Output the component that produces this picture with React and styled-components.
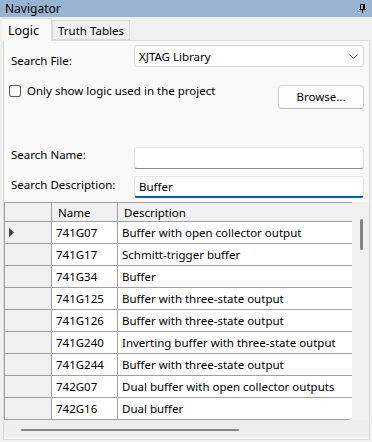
import React from "react";
import styled, { createGlobalStyle } from "styled-components";

const GlobalStyle = createGlobalStyle`
    html, body {
        margin: 0;
        padding: 0;
        background: #f0f0f0;
    }
    * {
        box-sizing: border-box;
    }
`

const Window = styled.div`
    width: 372px;
    height: 442px;
    display: flex;
    flex-direction: column;
    background: #f0f0f0;
    font-family: "Noto Sans", "Open Sans", sans-serif;
    font-size: 11.5px;
    color: #000;
    overflow: hidden;
`

const TitleBar = styled.div`
    height: 17px;
    flex: none;
    display: flex;
    align-items: center;
    justify-content: space-between;
    padding: 0 6px 0 5px;
    background: #99b4d1;
    line-height: 17px;
    font-size: 12px;
`

const TabStrip = styled.div`
    height: 23px;
    flex: none;
    display: flex;
    align-items: flex-end;
    padding-left: 2px;
    position: relative;
    z-index: 1;
`

const Tab = styled.div`
    height: ${p => (p.$active ? "23px" : "20px")};
    padding: ${p => (p.$active ? "0 12px 0 6px" : "1px 5px 0")};
    display: flex;
    align-items: center;
    background: ${p => (p.$active ? "#f9f9f9" : "#f0f0f0")};
    border: 1px solid #d9d9d9;
    border-bottom: ${p => (p.$active ? "none" : "1px solid #d9d9d9")};
    border-left: ${p => (p.$active ? "none" : "1px solid #d9d9d9")};
    margin-bottom: ${p => (p.$active ? "-1px" : "0")};
    font-size: ${p => (p.$active ? "12.5px" : "11.5px")};
`

const Panel = styled.div`
    flex: 1;
    display: flex;
    flex-direction: column;
    margin: 0 2px 2px 3px;
    border: 1px solid #d9d9d9;
    background: #f9f9f9;
    min-height: 0;
`

const FieldRow = styled.div`
    display: flex;
    align-items: flex-start;
    margin-top: ${p => p.$top}px;
    padding: 0 5px 0 7px;
    flex: none;
`

const Label = styled.label`
    width: 123px;
    flex: none;
    line-height: 16px;
    padding-top: ${p => p.$drop || 0}px;
    white-space: nowrap;
`

const Combo = styled.div`
    flex: 1;
    height: 22px;
    display: flex;
    align-items: center;
    justify-content: space-between;
    padding: 0 5px 0 4px;
    background: #fff;
    border: 1px solid #d5d5d5;
    border-radius: 3px;
`

const TextBox = styled.input`
    flex: 1;
    min-width: 0;
    height: 22px;
    padding: 0 4px;
    font: inherit;
    color: #000;
    background: #fff;
    border: 1px solid #e5e5e5;
    border-bottom: ${p => (p.$focused ? "2px solid #005fb8" : "1px solid #8a8a8a")};
    border-radius: 3px;
    outline: none;
`

const OptionsRow = styled.div`
    display: flex;
    justify-content: space-between;
    align-items: flex-start;
    margin-top: 16px;
    padding: 0 5px 0 5px;
    flex: none;
`

const CheckLabel = styled.label`
    display: flex;
    align-items: center;
    gap: 6px;
    margin-top: -2px;
    line-height: 16px;
`

const CheckBox = styled.input`
    appearance: none;
    width: 12px;
    height: 12px;
    margin: 0;
    border: 1px solid #5a5a5a;
    border-radius: 2px;
    background: #f9f9f9;
`

const Button = styled.button`
    width: 86px;
    height: 24px;
    font: inherit;
    color: #000;
    background: #fdfdfd;
    border: 1px solid #d0d0d0;
    border-bottom-color: #b8b8b8;
    border-radius: 4px;
    padding: 0 0 2px;
`

const GridFrame = styled.div`
    flex: 1;
    min-height: 0;
    margin: 4px 0 2px 0;
    display: grid;
    grid-template-columns: 1fr 17px;
    grid-template-rows: 1fr 17px;
`

const Table = styled.div`
    overflow: hidden;
    border-left: 1px solid #a0a0a0;
    border-top: 1px solid #a0a0a0;
    border-bottom-right-radius: 4px;
    background: #fff;
`

const Row = styled.div`
    display: grid;
    grid-template-columns: 47px 66px 1fr;
    height: ${p => (p.$header ? "19px" : "22px")};
`

const Cell = styled.div`
    display: flex;
    align-items: center;
    padding-left: ${p => (p.$header ? "6px" : "4px")};
    background: ${p => (p.$gray ? "#f0f0f0" : "#fff")};
    border-right: ${p => (p.$last ? "none" : "1px solid #a0a0a0")};
    border-bottom: 1px solid #a0a0a0;
    white-space: nowrap;
    overflow: hidden;
`

const VScroll = styled.div`
    background: #f0f0f0;
    position: relative;
`

const VThumb = styled.div`
    position: absolute;
    left: 8px;
    top: 17px;
    width: 3px;
    height: 31px;
    border-radius: 2px;
    background: #858585;
`

const HScroll = styled.div`
    grid-column: 1 / 3;
    background: #eeeeee;
    position: relative;
`

const HThumb = styled.div`
    position: absolute;
    left: 17px;
    top: 9px;
    width: 218px;
    height: 2px;
    border-radius: 1px;
    background: #858585;
`

const RowArrow = () => (
    <svg width="6" height="9" viewBox="0 0 6 9">
        <path d="M0 0 L5 4.5 L0 9 Z" fill="#404040" />
    </svg>
)

const PinIcon = () => (
    <svg width="7" height="9" viewBox="0 0 7 9" shapeRendering="crispEdges">
        <rect x="1" y="0" width="5" height="1" fill="#000" />
        <rect x="1" y="1" width="1" height="4" fill="#000" />
        <rect x="4" y="1" width="2" height="4" fill="#000" />
        <rect x="0" y="5" width="7" height="1" fill="#000" />
        <rect x="3" y="6" width="1" height="3" fill="#000" />
    </svg>
)

const Chevron = () => (
    <svg width="9" height="5" viewBox="0 0 9 5">
        <path d="M0.5 0.5 L4.5 4.5 L8.5 0.5" fill="none" stroke="#6a6a6a" strokeWidth="1" />
    </svg>
)

const parts = [
    ["741G07", "Buffer with open collector output"],
    ["741G17", "Schmitt-trigger buffer"],
    ["741G34", "Buffer"],
    ["741G125", "Buffer with three-state output"],
    ["741G126", "Buffer with three-state output"],
    ["741G240", "Inverting buffer with three-state output"],
    ["741G244", "Buffer with three-state output"],
    ["742G07", "Dual buffer with open collector outputs"],
    ["742G16", "Dual buffer"],
]

export default function App() {
    return (
        <Window>
            <GlobalStyle />
            <TitleBar>
                <span>Navigator</span>
                <PinIcon />
            </TitleBar>
            <TabStrip>
                <Tab $active>Logic</Tab>
                <Tab>Truth Tables</Tab>
            </TabStrip>
            <Panel>
                <FieldRow $top={4}>
                    <Label $drop={8}>Search File:</Label>
                    <Combo>
                        <span>XJTAG Library</span>
                        <Chevron />
                    </Combo>
                </FieldRow>
                <OptionsRow>
                    <CheckLabel>
                        <CheckBox type="checkbox" />
                        Only show logic used in the project
                    </CheckLabel>
                    <Button>Browse...</Button>
                </OptionsRow>
                <FieldRow $top={38}>
                    <Label>Search Name:</Label>
                    <TextBox defaultValue="" />
                </FieldRow>
                <FieldRow $top={7}>
                    <Label $drop={1}>Search Description:</Label>
                    <TextBox $focused defaultValue="Buffer" />
                </FieldRow>
                <GridFrame>
                    <Table>
                        <Row $header>
                            <Cell $header $gray></Cell>
                            <Cell $header $gray>Name</Cell>
                            <Cell $header $gray $last>Description</Cell>
                        </Row>
                        {parts.map(([name, desc], i) => (
                            <Row key={name}>
                                <Cell $gray>{i === 0 && <RowArrow />}</Cell>
                                <Cell>{name}</Cell>
                                <Cell $last>{desc}</Cell>
                            </Row>
                        ))}
                        <Row>
                            <Cell $gray></Cell>
                            <Cell></Cell>
                            <Cell $last></Cell>
                        </Row>
                    </Table>
                    <VScroll>
                        <VThumb />
                    </VScroll>
                    <HScroll>
                        <HThumb />
                    </HScroll>
                </GridFrame>
            </Panel>
        </Window>
    );
}
